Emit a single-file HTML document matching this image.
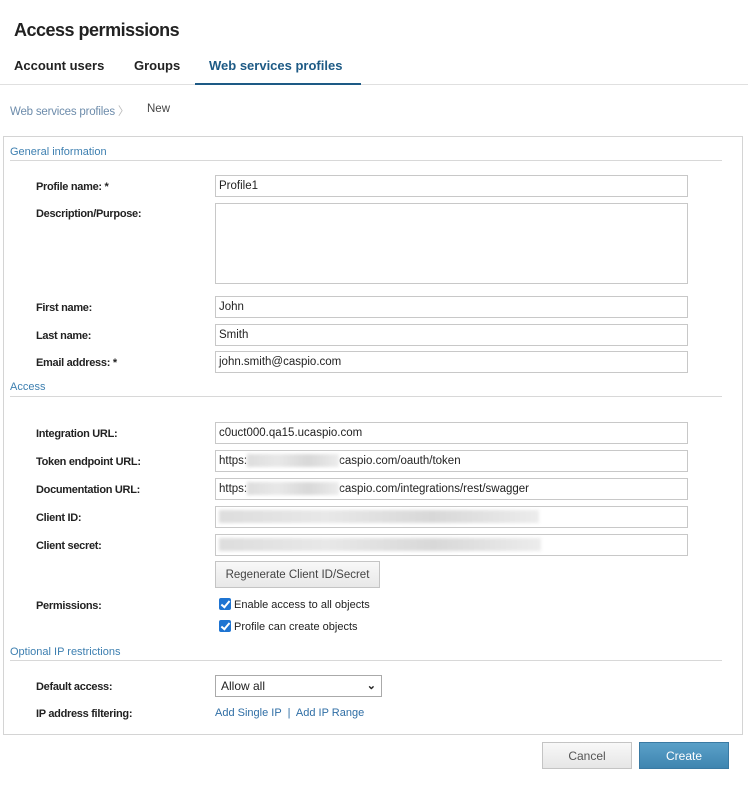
<!DOCTYPE html>
<html><head><style>
*{box-sizing:border-box;margin:0;padding:0}
body{width:748px;height:786px;background:#fff;font-family:"Liberation Sans",sans-serif;color:#222;position:relative;overflow:hidden}
.a{position:absolute;white-space:nowrap}
.lbl{position:absolute;left:36px;font-size:11px;font-weight:bold;color:#222;letter-spacing:-0.3px}
.inp{position:absolute;left:215px;width:473px;height:22px;border:1px solid #c8c8c8;background:#fff;font-size:11.5px;padding:0 3px;line-height:21px;color:#222}
.sec{position:absolute;left:10px;font-size:11px;color:#3d7fb0}
.line{position:absolute;left:10px;width:712px;height:1px;background:#d8d8d8}
.blur{display:inline-block;height:13px;background:linear-gradient(90deg,#ddd,#e8e8e8,#d8d8d8,#ececec);filter:blur(1.5px);vertical-align:middle}
.cb{position:absolute;left:219px;width:12px;height:12px;background:#1e74d2;border-radius:2px}
.cb:after{content:"";position:absolute;left:3.5px;top:1px;width:3px;height:7px;border:solid #fff;border-width:0 2px 2px 0;transform:rotate(40deg)}
</style></head><body>
<div class="a" style="left:14px;top:20px;font-size:18px;font-weight:bold;color:#222;letter-spacing:-0.5px">Access permissions</div>
<div class="a" style="left:14px;top:58px;font-size:13px;font-weight:bold;color:#222">Account users</div>
<div class="a" style="left:134px;top:58px;font-size:13px;font-weight:bold;color:#222">Groups</div>
<div class="a" style="left:209px;top:58px;font-size:13px;font-weight:bold;color:#1d5a85">Web services profiles</div>
<div class="a" style="left:0;top:84px;width:748px;height:1px;background:#e0e0e0"></div>
<div class="a" style="left:195px;top:83px;width:166px;height:2px;background:#1d5a85"></div>
<div class="a" style="left:10px;top:103px;font-size:11.5px;color:#6d8cab;letter-spacing:-0.2px">Web services profiles <span style="color:#bbb">〉</span></div>
<div class="a" style="left:147px;top:103px;font-size:11.5px;color:#444">New</div>
<div class="a" style="left:3px;top:136px;width:740px;height:599px;border:1px solid #d4d4d4"></div>
<div class="sec" style="top:146px">General information</div><div class="line" style="top:160px"></div>
<div class="lbl" style="top:181px">Profile name: *</div><div class="inp" style="top:175px">Profile1</div>
<div class="lbl" style="top:208px">Description/Purpose:</div><div class="inp" style="top:203px;height:81px"></div>
<div class="lbl" style="top:302px">First name:</div><div class="inp" style="top:296px">John</div>
<div class="lbl" style="top:330px">Last name:</div><div class="inp" style="top:324px">Smith</div>
<div class="lbl" style="top:357px">Email address: *</div><div class="inp" style="top:351px">john.smith@caspio.com</div>
<div class="sec" style="top:381px">Access</div><div class="line" style="top:396px"></div>
<div class="lbl" style="top:428px">Integration URL:</div><div class="inp" style="top:422px">c0uct000.qa15.ucaspio.com</div>
<div class="lbl" style="top:456px">Token endpoint URL:</div><div class="inp" style="top:450px">https:<span class="blur" style="width:92px"></span>caspio.com/oauth/token</div>
<div class="lbl" style="top:484px">Documentation URL:</div><div class="inp" style="top:478px">https:<span class="blur" style="width:92px"></span>caspio.com/integrations/rest/swagger</div>
<div class="lbl" style="top:512px">Client ID:</div><div class="inp" style="top:506px"><span class="blur" style="width:320px"></span></div>
<div class="lbl" style="top:540px">Client secret:</div><div class="inp" style="top:534px"><span class="blur" style="width:322px"></span></div>
<div class="a" style="left:215px;top:561px;width:165px;height:27px;border:1px solid #c4c4c4;background:linear-gradient(#f8f8f8,#e8e8e8);font-size:11.5px;color:#444;text-align:center;line-height:26px">Regenerate Client ID/Secret</div>
<div class="lbl" style="top:600px">Permissions:</div>
<div class="cb" style="top:598px"></div><div class="a" style="left:234px;top:599px;font-size:11px">Enable access to all objects</div>
<div class="cb" style="top:620px"></div><div class="a" style="left:234px;top:621px;font-size:11px">Profile can create objects</div>
<div class="sec" style="top:646px">Optional IP restrictions</div><div class="line" style="top:660px"></div>
<div class="lbl" style="top:681px">Default access:</div>
<div class="a" style="left:215px;top:675px;width:167px;height:22px;border:1px solid #aaa;font-size:12px;padding:0 5px;line-height:20px">Allow all<span style="position:absolute;right:5px;top:0;font-size:11px;font-weight:bold">&#8964;</span></div>
<div class="lbl" style="top:708px">IP address filtering:</div>
<div class="a" style="left:215px;top:707px;font-size:11px;color:#2f6ea5">Add Single IP &nbsp;|&nbsp; Add IP Range</div>
<div class="a" style="left:542px;top:742px;width:90px;height:27px;border:1px solid #c4c4c4;background:linear-gradient(#f8f8f8,#e6e6e6);font-size:12px;color:#555;text-align:center;line-height:26px">Cancel</div>
<div class="a" style="left:639px;top:742px;width:90px;height:27px;border:1px solid #3a7aa3;background:linear-gradient(#5aa0c8,#3f85b0);font-size:12px;color:#fff;text-align:center;line-height:26px">Create</div>
</body></html>
